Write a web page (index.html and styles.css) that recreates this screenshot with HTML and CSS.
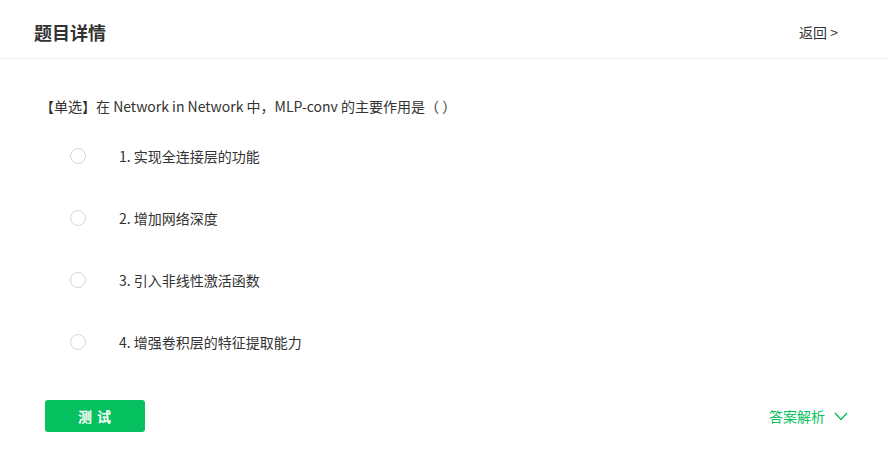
FILE: index.html
```html
<!DOCTYPE html>
<html lang="zh-CN">
<head>
<meta charset="utf-8">
<title>题目详情</title>
<link rel="stylesheet" href="styles.css">
</head>
<body>
<div class="page">
  <div class="header">
    <div class="title">题目详情</div>
    <a class="back">返回 &gt;</a>
  </div>
  <div class="content">
    <div class="question">【单选】在 Network in Network 中，MLP-conv 的主要作用是（ ）</div>
    <ul class="options">
      <li class="option"><span class="radio"></span><span class="label">1. 实现全连接层的功能</span></li>
      <li class="option"><span class="radio"></span><span class="label">2. 增加网络深度</span></li>
      <li class="option"><span class="radio"></span><span class="label">3. 引入非线性激活函数</span></li>
      <li class="option"><span class="radio"></span><span class="label">4. 增强卷积层的特征提取能力</span></li>
    </ul>
    <div class="footer">
      <button class="btn">测 试</button>
      <a class="analysis">答案解析
        <svg class="chev" width="14" height="9" viewBox="0 0 14 9"><polyline points="1,1 7,7.5 13,1" fill="none" stroke="#07c160" stroke-width="1.4"/></svg>
      </a>
    </div>
  </div>
</div>
</body>
</html>
```
FILE: styles.css
```css
* { box-sizing: border-box; }
body {
  margin: 0;
  background: #fff;
  font-family: "Noto Sans CJK SC", "Noto Sans", sans-serif;
  color: #333;
}
.header {
  height: 59px;
  border-bottom: 1px solid #eeeeee;
  display: flex;
  align-items: center;
  justify-content: space-between;
  padding: 6px 50px 0 34px;
}
.title {
  font-size: 18px;
  font-weight: bold;
  color: #333;
}
.back {
  font-size: 14px;
  color: #333;
}
.content {
  padding: 0 40px 0 40px;
}
.question {
  margin-top: 37px;
  font-size: 14px;
  line-height: 20px;
  color: #333;
}
.options {
  list-style: none;
  margin: 9px 0 0 0;
  padding: 0 0 0 30px;
}
.option {
  height: 62px;
  display: flex;
  align-items: center;
}
.radio {
  width: 16px;
  height: 16px;
  border: 1px solid #d6d6d6;
  border-radius: 50%;
  margin-right: 33px;
  flex: none;
}
.label {
  font-size: 14px;
  color: #333;
}
.footer {
  margin-top: 27px;
  display: flex;
  align-items: center;
  justify-content: space-between;
  padding: 0 0 0 5px;
}
.btn {
  width: 100px;
  height: 32px;
  border: none;
  border-radius: 3px;
  background: #07c160;
  color: #fff;
  font-family: inherit;
  font-size: 14px;
  font-weight: bold;
  letter-spacing: 1px;
}
.analysis {
  font-size: 14px;
  color: #07c160;
  display: flex;
  align-items: center;
  gap: 9px;
}
```
